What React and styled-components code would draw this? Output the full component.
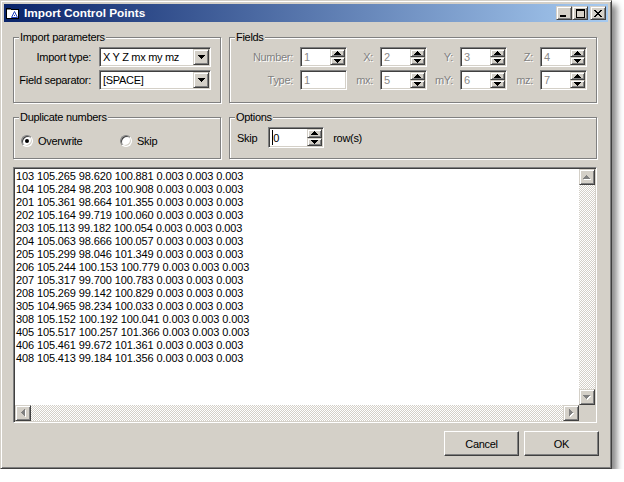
import React from 'react';
import styled, { createGlobalStyle, css } from 'styled-components';

const FACE = '#D4D0C8';

const Global = createGlobalStyle`
  html, body { margin: 0; padding: 0; background: #fff; }
  body {
    font-family: "Liberation Sans", Arial, sans-serif;
    font-size: 11px;
    color: #000;
  }
  * { box-sizing: border-box; }
  svg { display: block; }
`;

const raised = css`
  background: ${FACE};
  border: 1px solid;
  border-color: ${FACE} #404040 #404040 ${FACE};
  box-shadow: inset 1px 1px #fff, inset -1px -1px #808080;
`;

const sunken = css`
  border: 1px solid;
  border-color: #808080 #fff #fff #808080;
  box-shadow: inset 1px 1px #404040, inset -1px -1px ${FACE};
`;

const Window = styled.div`
  width: 612px;
  height: 469px;
  background: ${FACE};
  border: 1px solid;
  border-color: ${FACE} #404040 #404040 ${FACE};
  box-shadow: inset 1px 1px #fff, inset -1px -1px #808080, 5px 5px 6px rgba(0, 0, 0, 0.45);
  padding: 3px;
  display: flex;
  flex-direction: column;
`;

const TitleBar = styled.div`
  height: 18px;
  flex: none;
  display: flex;
  align-items: center;
  padding: 0 2px 0 1px;
  background: linear-gradient(to right, #0a246a, #a6caf0);
`;

const Title = styled.div`
  flex: 1;
  margin-left: 3px;
  color: #fff;
  font-weight: bold;
  font-size: 11.8px;
  line-height: 18px;
  white-space: nowrap;
`;

const CaptionButtons = styled.div`
  display: flex;
  align-items: center;
`;

const CaptionButton = styled.div`
  ${raised};
  width: 16px;
  height: 14px;
  display: flex;
  align-items: center;
  justify-content: center;
  margin-left: ${p => (p.$gap ? 2 : 0)}px;
`;

const Body = styled.div`
  flex: 1;
  min-height: 0;
  display: flex;
  flex-direction: column;
  gap: 8px;
  padding: 9px 11px 9px 9px;
`;

const GroupRow = styled.div`
  display: grid;
  grid-template-columns: 208px 368px;
  column-gap: 8px;
`;

const Group = styled.fieldset`
  margin: 0;
  padding: 0;
  min-width: 0;
  border: 1px solid #808080;
  box-shadow: inset 1px 1px #fff, 1px 1px #fff;
`;

const Legend = styled.legend`
  margin-left: 5px;
  padding: 0 1px;
  line-height: 13px;
  font-size: 11px;
  letter-spacing: -0.3px;
  background: ${FACE};
`;

const ParamGrid = styled.div`
  display: grid;
  grid-template-columns: 77px 112px;
  column-gap: 8px;
  row-gap: 3px;
  align-items: center;
  padding: 3px 9px 12px 0;
`;

const FieldsGrid = styled.div`
  display: grid;
  grid-template-columns: 64px 47px 33px 47px 33px 47px 33px 47px;
  grid-auto-rows: 20px;
  row-gap: 3px;
  align-items: center;
  padding: 3px 9px 12px 6px;
`;

const FieldLabel = styled.span`
  justify-self: end;
  padding-right: ${p => (p.$pad ? 7 : 0)}px;
  white-space: nowrap;
  letter-spacing: -0.3px;
  line-height: 13px;
  color: ${p => (p.$disabled ? '#808080' : '#000')};
  text-shadow: ${p => (p.$disabled ? '1px 1px #fff' : 'none')};
`;

const Field = styled.div`
  ${sunken};
  width: ${p => p.$w}px;
  height: ${p => p.$h}px;
  background: #fff;
  padding: 1px;
  display: flex;
  align-items: stretch;
`;

const FieldValue = styled.div`
  flex: 1;
  display: flex;
  align-items: center;
  padding-left: 2px;
  white-space: nowrap;
  overflow: hidden;
  letter-spacing: -0.3px;
  color: ${p => (p.$disabled ? '#8a8a8a' : '#000')};
`;

const Caret = styled.span`
  width: 1px;
  height: 15px;
  background: #000;
`;

const DropButton = styled.div`
  ${raised};
  width: 16px;
  flex: none;
  display: flex;
  align-items: center;
  justify-content: center;
`;

const SpinButtons = styled.div`
  width: 15px;
  flex: none;
  display: flex;
  flex-direction: column;
`;

const SpinButton = styled.div`
  ${raised};
  flex: 1;
  display: flex;
  align-items: center;
  justify-content: center;
`;

const RadioRow = styled.div`
  display: grid;
  grid-template-columns: 99px auto;
  align-items: center;
  padding: 10px 0 11px 7px;
`;

const RadioItem = styled.label`
  display: flex;
  align-items: center;
  gap: 5px;
  letter-spacing: -0.3px;
  height: 13px;
`;

const RadioCircle = styled.span`
  width: 12px;
  height: 12px;
  flex: none;
  border-radius: 50%;
  background: #fff;
  border: 1px solid;
  border-color: #808080 #fff #fff #808080;
  box-shadow: inset 1px 1px #404040, inset -1px -1px ${FACE};
  display: flex;
  align-items: center;
  justify-content: center;
  &::after {
    content: '';
    width: 4px;
    height: 4px;
    border-radius: 50%;
    background: ${p => (p.$checked ? '#000' : 'transparent')};
  }
`;

const OptionsRow = styled.div`
  display: flex;
  align-items: center;
  padding: 3px 0 10px 7px;
  letter-spacing: -0.3px;
`;

const OptText = styled.span`
  margin-left: ${p => p.$ml || 0}px;
  margin-right: ${p => p.$mr || 0}px;
`;

const DataPanel = styled.div`
  ${sunken};
  flex: 1;
  min-height: 0;
  padding: 1px;
  background: #fff;
  display: grid;
  grid-template-columns: 1fr 16px;
  grid-template-rows: 1fr 16px;
`;

const DataText = styled.div`
  padding: 1px 0 0 1px;
  overflow: hidden;
  white-space: pre;
  font-size: 11px;
  line-height: 13px;
  letter-spacing: -0.12px;
`;

const ScrollBar = styled.div`
  display: flex;
  flex-direction: ${p => (p.$vertical ? 'column' : 'row')};
`;

const ScrollButton = styled.div`
  ${raised};
  width: 16px;
  height: 16px;
  flex: none;
  display: flex;
  align-items: center;
  justify-content: center;
`;

const Track = styled.div`
  flex: 1;
  background-color: #fff;
  background-image: conic-gradient(${FACE} 0 25%, #fff 0 50%, ${FACE} 0 75%, #fff 0);
  background-size: 2px 2px;
`;

const Corner = styled.div`
  background: ${FACE};
`;

const ButtonRow = styled.div`
  display: flex;
  justify-content: flex-end;
  gap: 5px;
  margin-right: -2px;
`;

const PushButton = styled.div`
  width: 75px;
  height: 25px;
  background: ${FACE};
  border: 1px solid;
  border-color: #fff #404040 #404040 #fff;
  box-shadow: inset -1px -1px #808080, inset 1px 1px ${FACE};
  display: flex;
  align-items: center;
  justify-content: center;
  letter-spacing: -0.3px;
`;

/* ---------- drawings ---------- */

function triRects(dir, size) {
  const r = [];
  for (let i = 0; i < size; i++) {
    const grow = dir === 'up' || dir === 'left';
    const len = 2 * (grow ? i : size - 1 - i) + 1;
    const off = grow ? size - 1 - i : i;
    if (dir === 'up' || dir === 'down') r.push({ x: off, y: i, w: len, h: 1 });
    else r.push({ x: i, y: off, w: 1, h: len });
  }
  return r;
}

function Arrow({ dir, size = 4, disabled }) {
  const base = 2 * size - 1;
  const vert = dir === 'up' || dir === 'down';
  const W = (vert ? base : size) + (disabled ? 1 : 0);
  const H = (vert ? size : base) + (disabled ? 1 : 0);
  const rects = triRects(dir, size);
  return (
    <svg width={W} height={H} shapeRendering="crispEdges">
      {disabled &&
        rects.map((q, i) => (
          <rect key={'s' + i} x={q.x + 1} y={q.y + 1} width={q.w} height={q.h} fill="#fff" />
        ))}
      {rects.map((q, i) => (
        <rect key={i} x={q.x} y={q.y} width={q.w} height={q.h} fill={disabled ? '#808080' : '#000'} />
      ))}
    </svg>
  );
}

const AppIcon = () => (
  <svg width="16" height="16" viewBox="0 0 16 16" shapeRendering="crispEdges">
    <path d="M1.5 3.5h4l1 1h7v9h-12z" fill="#fff" stroke="#000" />
    <rect x="2" y="4" width="4" height="1" fill="#808080" />
    <path d="M9.5 6.5l3 6h-6z" fill="none" stroke="#1f3fbf" shapeRendering="geometricPrecision" />
    <rect x="9" y="10" width="1" height="1" fill="#1f3fbf" />
  </svg>
);

const MinGlyph = () => (
  <svg width="8" height="7" shapeRendering="crispEdges">
    <rect x="0" y="5" width="6" height="2" fill="#000" />
  </svg>
);

const MaxGlyph = () => (
  <svg width="9" height="9" shapeRendering="crispEdges">
    <rect x="0" y="0" width="9" height="2" fill="#000" />
    <rect x="0" y="0" width="1" height="9" fill="#000" />
    <rect x="8" y="0" width="1" height="9" fill="#000" />
    <rect x="0" y="8" width="9" height="1" fill="#000" />
  </svg>
);

const CloseGlyph = () => (
  <svg width="8" height="7" shapeRendering="crispEdges">
    {Array.from({ length: 7 }).map((_, i) => (
      <React.Fragment key={i}>
        <rect x={i} y={i} width="2" height="1" fill="#000" />
        <rect x={6 - i} y={i} width="2" height="1" fill="#000" />
      </React.Fragment>
    ))}
  </svg>
);

/* ---------- composite controls ---------- */

const Combo = ({ value }) => (
  <Field $w={112} $h={20}>
    <FieldValue>{value}</FieldValue>
    <DropButton>
      <Arrow dir="down" size={4} />
    </DropButton>
  </Field>
);

const Spin = ({ value, disabled, w = 47, h = 20, caret }) => (
  <Field $w={w} $h={h}>
    <FieldValue $disabled={disabled}>
      {caret && <Caret />}
      {value}
    </FieldValue>
    <SpinButtons>
      <SpinButton>
        <Arrow dir="up" size={4} />
      </SpinButton>
      <SpinButton>
        <Arrow dir="down" size={4} />
      </SpinButton>
    </SpinButtons>
  </Field>
);

const Edit = ({ value, disabled }) => (
  <Field $w={47} $h={20}>
    <FieldValue $disabled={disabled}>{value}</FieldValue>
  </Field>
);

const lines = [
  '103 105.265 98.620 100.881 0.003 0.003 0.003',
  '104 105.284 98.203 100.908 0.003 0.003 0.003',
  '201 105.361 98.664 101.355 0.003 0.003 0.003',
  '202 105.164 99.719 100.060 0.003 0.003 0.003',
  '203 105.113 99.182 100.054 0.003 0.003 0.003',
  '204 105.063 98.666 100.057 0.003 0.003 0.003',
  '205 105.299 98.046 101.349 0.003 0.003 0.003',
  '206 105.244 100.153 100.779 0.003 0.003 0.003',
  '207 105.317 99.700 100.783 0.003 0.003 0.003',
  '208 105.269 99.142 100.829 0.003 0.003 0.003',
  '305 104.965 98.234 100.033 0.003 0.003 0.003',
  '308 105.152 100.192 100.041 0.003 0.003 0.003',
  '405 105.517 100.257 101.366 0.003 0.003 0.003',
  '406 105.461 99.672 101.361 0.003 0.003 0.003',
  '408 105.413 99.184 101.356 0.003 0.003 0.003',
];

const fields = [
  [['Number:', 'spin', '1'], ['X:', 'spin', '2'], ['Y:', 'spin', '3'], ['Z:', 'spin', '4']],
  [['Type:', 'edit', '1'], ['mx:', 'spin', '5'], ['mY:', 'spin', '6'], ['mz:', 'spin', '7']],
];

export default function App() {
  return (
    <>
      <Global />
      <Window>
        <TitleBar>
          <AppIcon />
          <Title>Import Control Points</Title>
          <CaptionButtons>
            <CaptionButton>
              <MinGlyph />
            </CaptionButton>
            <CaptionButton>
              <MaxGlyph />
            </CaptionButton>
            <CaptionButton $gap>
              <CloseGlyph />
            </CaptionButton>
          </CaptionButtons>
        </TitleBar>
        <Body>
          <GroupRow>
            <Group>
              <Legend>Import parameters</Legend>
              <ParamGrid>
                <FieldLabel>Import type:</FieldLabel>
                <Combo value="X Y Z mx my mz" />
                <FieldLabel>Field separator:</FieldLabel>
                <Combo value="[SPACE]" />
              </ParamGrid>
            </Group>
            <Group>
              <Legend>Fields</Legend>
              <FieldsGrid>
                {fields.flat().map(([label, kind, val]) => (
                  <React.Fragment key={label}>
                    <FieldLabel $disabled $pad>
                      {label}
                    </FieldLabel>
                    {kind === 'spin' ? <Spin value={val} disabled /> : <Edit value={val} disabled />}
                  </React.Fragment>
                ))}
              </FieldsGrid>
            </Group>
          </GroupRow>
          <GroupRow>
            <Group>
              <Legend>Duplicate numbers</Legend>
              <RadioRow>
                <RadioItem>
                  <RadioCircle $checked />
                  Overwrite
                </RadioItem>
                <RadioItem>
                  <RadioCircle />
                  Skip
                </RadioItem>
              </RadioRow>
            </Group>
            <Group>
              <Legend>Options</Legend>
              <OptionsRow>
                <OptText $mr={11}>Skip</OptText>
                <Spin value="0" w={56} h={21} caret />
                <OptText $ml={9}>row(s)</OptText>
              </OptionsRow>
            </Group>
          </GroupRow>
          <DataPanel>
            <DataText>{lines.join('\n')}</DataText>
            <ScrollBar $vertical>
              <ScrollButton>
                <Arrow dir="up" size={4} disabled />
              </ScrollButton>
              <Track />
              <ScrollButton>
                <Arrow dir="down" size={4} disabled />
              </ScrollButton>
            </ScrollBar>
            <ScrollBar>
              <ScrollButton>
                <Arrow dir="left" size={4} disabled />
              </ScrollButton>
              <Track />
              <ScrollButton>
                <Arrow dir="right" size={4} disabled />
              </ScrollButton>
            </ScrollBar>
            <Corner />
          </DataPanel>
          <ButtonRow>
            <PushButton>Cancel</PushButton>
            <PushButton>OK</PushButton>
          </ButtonRow>
        </Body>
      </Window>
    </>
  );
}
